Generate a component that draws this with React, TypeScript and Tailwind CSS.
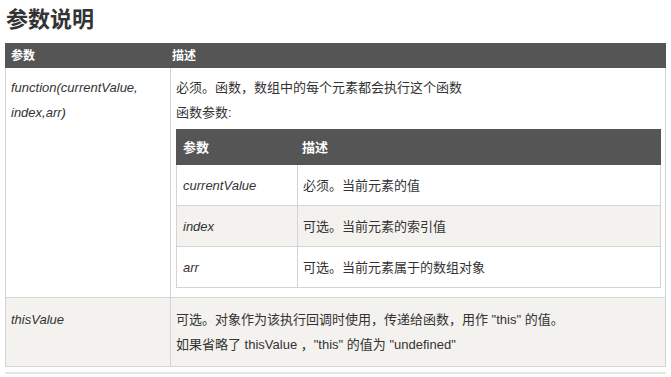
const font = { fontFamily: '"Liberation Sans", "Noto Sans CJK SC", sans-serif' };

type Param = { name: string; desc: string };

const callbackParams: Param[] = [
  { name: "currentValue", desc: "必须。当前元素的值" },
  { name: "index", desc: "可选。当前元素的索引值" },
  { name: "arr", desc: "可选。当前元素属于的数组对象" },
];

function InnerTable() {
  return (
    <table className="mt-[4px] mb-[2px] w-full border-collapse text-[13px]">
      <thead>
        <tr className="h-[35px] bg-[#555555] text-white">
          <th className="w-[121px] border border-[#555555] px-[6px] text-left font-bold">参数</th>
          <th className="border border-[#555555] px-[4px] text-left font-bold">描述</th>
        </tr>
      </thead>
      <tbody>
        {callbackParams.map((p, i) => (
          <tr key={p.name} className={`h-[41px] ${i % 2 === 1 ? "bg-[#f3f2ee]" : "bg-white"}`}>
            <td className="border border-[#d4d4d4] px-[6px] italic">{p.name}</td>
            <td className="border border-[#d4d4d4] px-[5px]">{p.desc}</td>
          </tr>
        ))}
      </tbody>
    </table>
  );
}

export default function App() {
  return (
    <div className="min-h-[377px] bg-white px-[5px] text-[#333333]" style={font}>
      <h2 className="pt-[8px] pl-px text-[22px] leading-[24px] font-bold mb-[11px]">参数说明</h2>

      <table className="w-[661px] border-collapse text-[13px]">
        <thead>
          <tr className="h-[24px] bg-[#555555] text-white">
            <th className="w-[165px] border border-[#555555] px-[5px] text-left text-[12px] font-bold">参数</th>
            <th className="border border-[#555555] px-[1px] text-left text-[12px] font-bold">描述</th>
          </tr>
        </thead>
        <tbody>
          <tr className="bg-white align-top">
            <td className="border border-[#d4d4d4] px-[5px] pt-[7px] pb-[7px] leading-[25px] italic">
              function(currentValue,
              <br />
              index,arr)
            </td>
            <td className="border border-[#d4d4d4] pl-[5px] pr-[4px] pt-[7px] pb-[7px] leading-[25px]">
              <p>必须。函数，数组中的每个元素都会执行这个函数</p>
              <p>函数参数:</p>
              <InnerTable />
            </td>
          </tr>
          <tr className="bg-[#f3f2ee] align-top">
            <td className="border border-[#d4d4d4] px-[5px] pt-[9px] pb-[9px] leading-[25px] italic">thisValue</td>
            <td className="border border-[#d4d4d4] px-[5px] pt-[9px] pb-[9px] leading-[25px]">
              <p>可选。对象作为该执行回调时使用，传递给函数，用作 "this" 的值。</p>
              <p>如果省略了 thisValue ，"this" 的值为 "undefined"</p>
            </td>
          </tr>
        </tbody>
      </table>

      <hr className="mt-[5px] w-[661px] border-t-2 border-[#e6e6e6]" />
    </div>
  );
}
